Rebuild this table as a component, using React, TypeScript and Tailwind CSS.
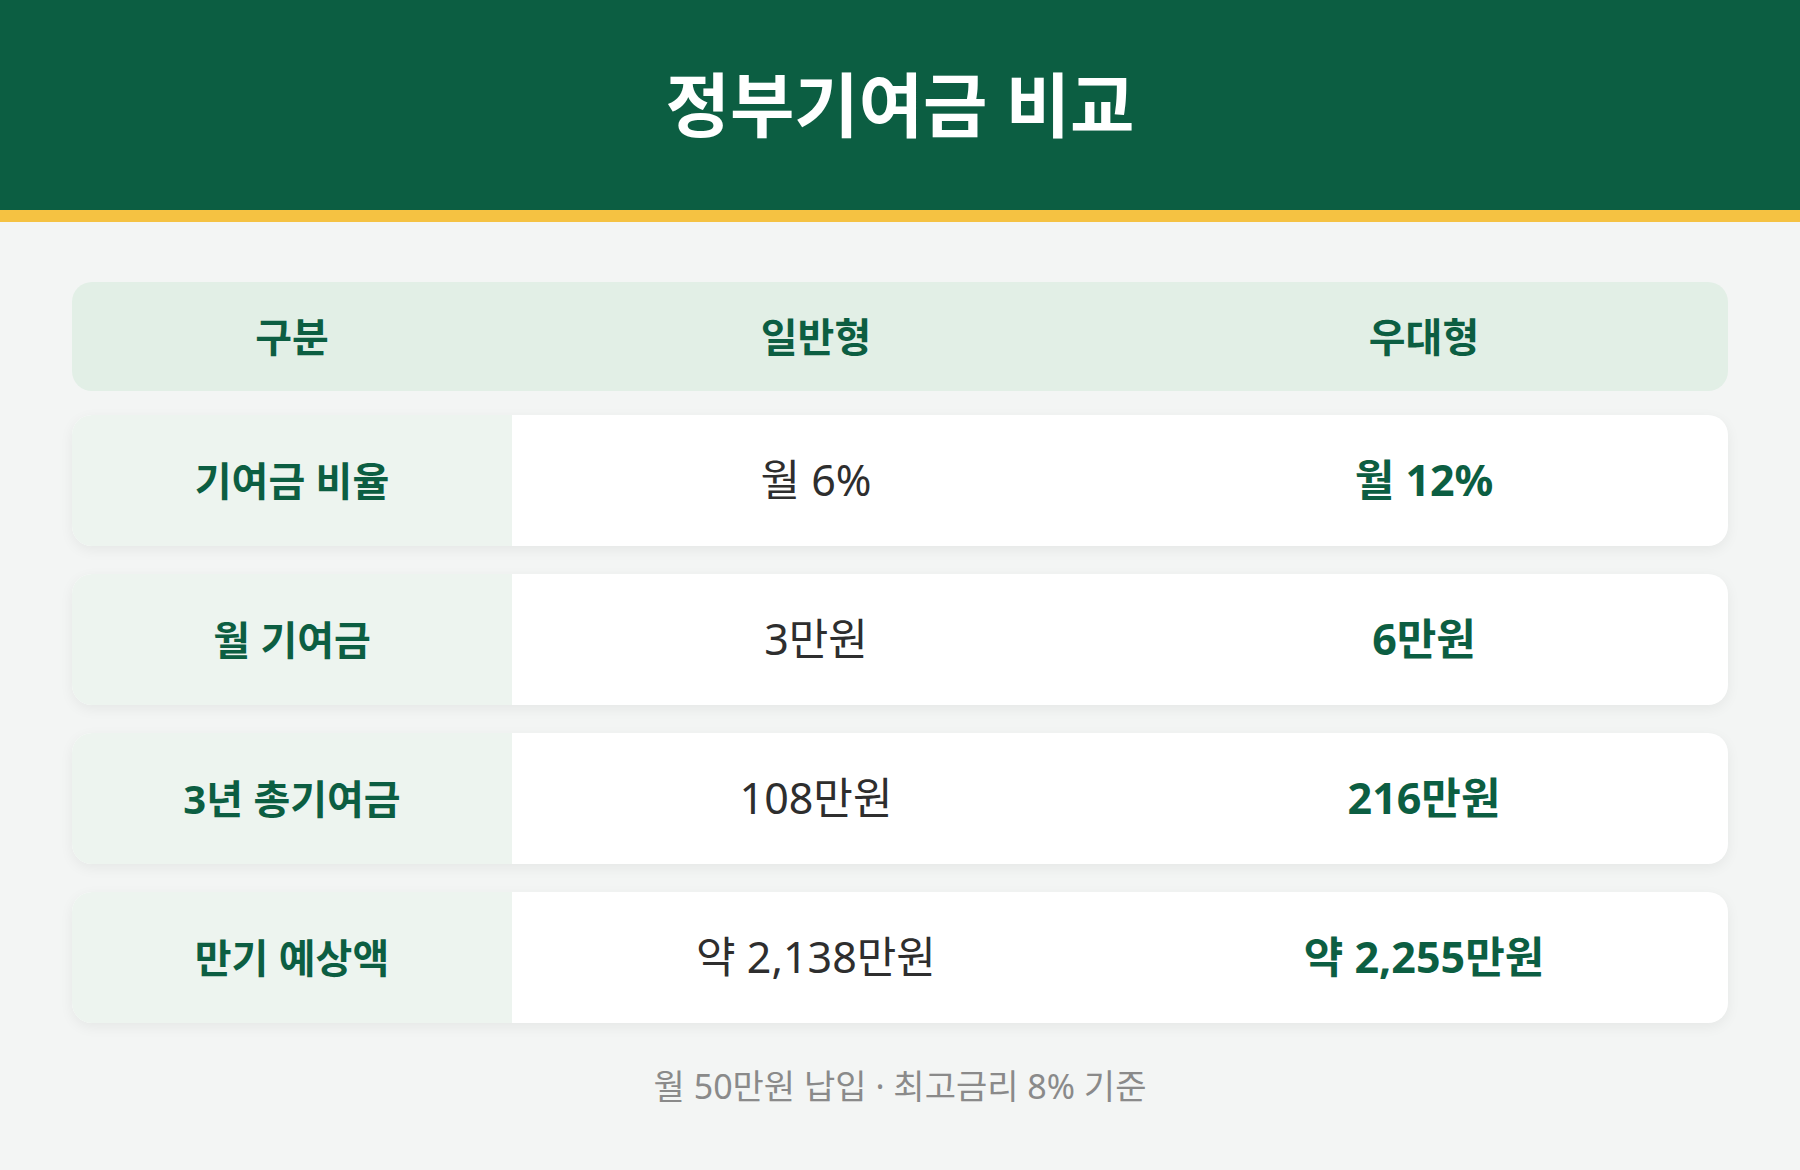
import React from 'react';

interface CompareRow {
  label: string;
  normal: string;
  preferred: string;
}

const rows: CompareRow[] = [
  { label: '기여금 비율', normal: '월 6%', preferred: '월 12%' },
  { label: '월 기여금', normal: '3만원', preferred: '6만원' },
  { label: '3년 총기여금', normal: '108만원', preferred: '216만원' },
  { label: '만기 예상액', normal: '약 2,138만원', preferred: '약 2,255만원' },
];

function RowItem({ row }: { row: CompareRow }) {
  return (
    <div className="grid grid-cols-[440px_1fr_1fr] h-[131px] rounded-[20px] overflow-hidden bg-white shadow-[0_4px_14px_rgba(0,0,0,0.06)]">
      <div className="flex items-center justify-center bg-[#edf4ef] text-[40px] font-bold text-[#0c5e42]">
        {row.label}
      </div>
      <div className="flex items-center justify-center text-[43px] font-normal text-[#2e2e2e]">
        {row.normal}
      </div>
      <div className="flex items-center justify-center text-[43px] font-bold text-[#0c5e42]">
        {row.preferred}
      </div>
    </div>
  );
}

export default function App() {
  return (
    <div
      className="w-[1800px] h-[1170px] bg-[#f3f5f4] flex flex-col"
      style={{ fontFamily: '"Noto Sans", "Noto Sans CJK KR", sans-serif' }}
    >
      <header className="h-[222px] shrink-0 bg-[#0c5e42] border-b-[12px] border-[#f5c242] flex items-center justify-center">
        <h1 className="text-[70px] font-bold text-white leading-none">정부기여금 비교</h1>
      </header>

      <main className="px-[72px] pt-[60px] flex flex-col">
        {/* column headings */}
        <div className="grid grid-cols-[440px_1fr_1fr] h-[109px] rounded-[20px] bg-[#e2efe6] text-[40px] font-bold text-[#0c5e42] mb-[24px]">
          <div className="flex items-center justify-center">구분</div>
          <div className="flex items-center justify-center">일반형</div>
          <div className="flex items-center justify-center">우대형</div>
        </div>

        <div className="flex flex-col gap-[28px]">
          {rows.map((row) => (
            <RowItem key={row.label} row={row} />
          ))}
        </div>

        <p className="mt-[38px] text-center text-[34px] text-[#8a8a8a] leading-[50px]">
          월 50만원 납입 · 최고금리 8% 기준
        </p>
      </main>
    </div>
  );
}
